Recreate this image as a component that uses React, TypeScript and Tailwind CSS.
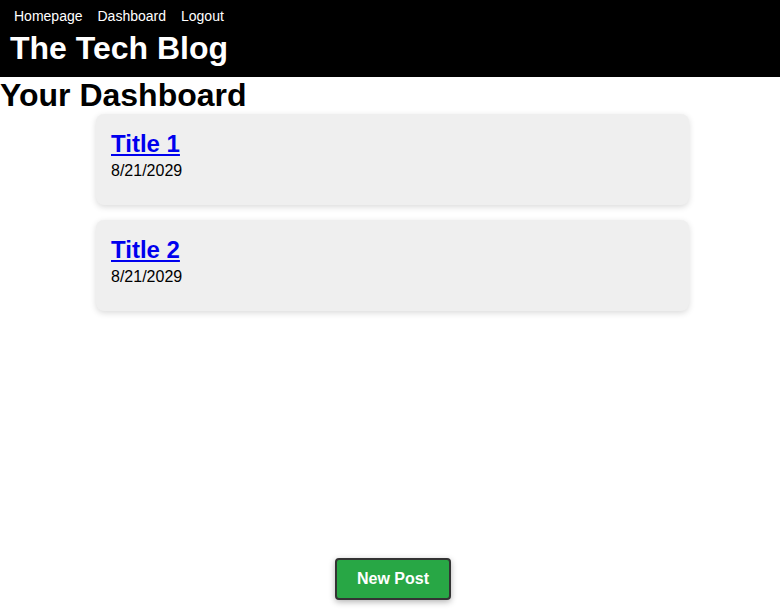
import React from 'react';

const posts = [
  { id: 1, title: 'Title 1', date: '8/21/2029' },
  { id: 2, title: 'Title 2', date: '8/21/2029' },
];

const App: React.FC = () => {
  return (
    <div className="h-[613px] flex flex-col bg-white text-black font-['Liberation_Sans',Arial,sans-serif]">
      <header className="bg-black text-white h-[77px] px-[10px] pt-[7px]">
        <nav className="flex gap-[15px] pl-[4px] text-[14px] leading-[18px]">
          <a href="#">Homepage</a>
          <a href="#">Dashboard</a>
          <a href="#">Logout</a>
        </nav>
        <h1 className="text-[32px] font-bold leading-[37px] mt-[5px]">The Tech Blog</h1>
      </header>

      <main className="flex-1 flex flex-col">
        <h2 className="text-[32px] font-bold leading-[37px]">Your Dashboard</h2>
        <div className="flex flex-col gap-[15px] ml-[96px] w-[593px]">
          {posts.map((post) => (
            <div
              key={post.id}
              className="bg-[#efefef] rounded-[8px] h-[91px] px-[15px] pt-[15px] shadow-[0_2px_6px_rgba(0,0,0,0.15)]"
            >
              <a href="#" className="text-[24px] font-bold text-[#0000ee] underline leading-[30px]">
                {post.title}
              </a>
              <p className="text-[16px] leading-[20px] mt-[2px]">{post.date}</p>
            </div>
          ))}
        </div>
        <div className="mt-auto mb-[13px] flex justify-center pl-[6px]">
          <button className="w-[116px] h-[42px] bg-[#28a745] text-white text-[16px] font-bold rounded-[4px] border-2 border-[#333] shadow-[0_2px_6px_rgba(0,0,0,0.3)]">
            New Post
          </button>
        </div>
      </main>
    </div>
  );
};

export default App;
